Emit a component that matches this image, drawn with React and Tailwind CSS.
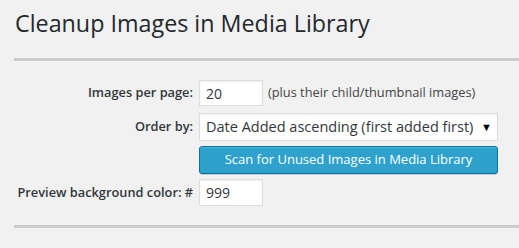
import { useState } from 'react';

export default function App() {
  const [perPage, setPerPage] = useState('20');
  const [order, setOrder] = useState('asc');
  const [bg, setBg] = useState('999');

  return (
    <div
      className="min-h-[248px] w-full bg-[#f1f1f1] pl-[14px] text-[#23282d]"
      style={{ fontFamily: '"Open Sans", "Noto Sans", sans-serif' }}
    >
      <h1 className="pt-[8px] pl-[1px] text-[23.3px] leading-[31px] font-normal">
        Cleanup Images in Media Library
      </h1>
      <div className="mt-[19px] h-[3px] bg-[#cccccc]" />

      <div className="grid grid-cols-[179px_auto] items-center gap-x-[6px] pt-[19px]">
        <label className="whitespace-nowrap text-right text-[12.8px] font-semibold text-[#32373c]">Images per page:</label>
        <div className="flex items-center gap-[5px]">
          <input
            value={perPage}
            onChange={(e) => setPerPage(e.target.value)}
            className="h-[26px] w-[64px] border border-[#dddddd] bg-white px-[6px] text-[14px] text-[#32373c] shadow-[inset_0_1px_2px_rgba(0,0,0,0.07)] outline-none"
          />
          <span className="text-[12.8px] text-[#444444]">(plus their child/thumbnail images)</span>
        </div>

        <label className="mt-[7px] whitespace-nowrap text-right text-[12.8px] font-semibold text-[#32373c]">Order by:</label>
        <div className="mt-[7px] flex h-[28px] w-[299px] items-center justify-between border border-[#dddddd] bg-white pl-[6px] pr-[5px] text-[14.5px] text-[#32373c] shadow-[inset_0_1px_2px_rgba(0,0,0,0.07)]">
          <span>{order === 'asc' ? 'Date Added ascending (first added first)' : 'Date Added descending'}</span>
          <span className="text-[11px] text-black" onClick={() => setOrder(order === 'asc' ? 'desc' : 'asc')}>▼</span>
        </div>

        <div />
        <button className="mt-[5px] h-[28px] w-[299px] rounded-[3px] border border-[#0074a2] bg-[#2ea2cc] text-[13px] text-white shadow-[inset_0_1px_0_rgba(120,200,230,0.5),0_1px_0_rgba(0,0,0,0.15)]">
          Scan for Unused Images in Media Library
        </button>

        <label className="mt-[5px] whitespace-nowrap text-right text-[12.8px] font-semibold text-[#32373c]">Preview background color: #</label>
        <div className="mt-[5px]">
          <input
            value={bg}
            onChange={(e) => setBg(e.target.value)}
            className="h-[27px] w-[64px] border border-[#dddddd] bg-white px-[6px] text-[14px] text-[#32373c] shadow-[inset_0_1px_2px_rgba(0,0,0,0.07)] outline-none"
          />
        </div>
      </div>

      <div className="mt-[19px] h-[3px] bg-[#cccccc]" />
    </div>
  );
}
